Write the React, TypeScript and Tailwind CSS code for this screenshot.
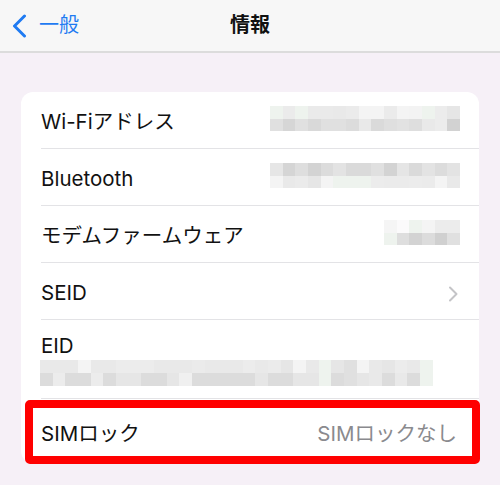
import React from "react";

const wifi = [
  ["#eef3ee", "#ebebeb", "#eef3ee", "#eaeaea", "#eaeaea", "#e9e9e9", "#ebebeb", "#f4f4f4", "#f4f4f4", "#ebebeb", "#f4f4f4", "#f3f3f3", "#eef3ee", "#ececec", "#e6e6e6"],
  ["#e0e0e0", "#d6d6d6", "#e0e0e0", "#d9d9d9", "#e0e0e0", "#e0e0e0", "#dcdcdc", "#e9e9e9", "#dadada", "#dfdfdf", "#e2e2e2", "#dedede", "#e9e9e9", "#ececec", "#d2d2d2"],
];
const bt = [
  ["#e6e6e6", "#d5d5d5", "#dedede", "#d3d3d3", "#dcdcdc", "#e3e3e3", "#dadada", "#dadada", "#e0e0e0", "#d3d3d3", "#e5e5e5", "#dadada", "#e3e3e3", "#dcdcdc", "#e3e3e3"],
  ["#f4f4f4", "#e9e9e9", "#ebebeb", "#e6e6e6", "#f4f4f4", "#eef3ee", "#eef3ee", "#eef3ee", "#ececec", "#ebebeb", "#ebebeb", "#ececec", "#ebebeb", "#f4f4f4", "#e9e9e9"],
];
const modem = [
  ["#f5f5f5", "#fbfafb", "#eef3ee", "#f4f4f4", "#ececec", "#ececec"],
  ["#eef3ee", "#dedede", "#d3d3d3", "#dcdcdc", "#d0d0d0", "#e0e0e0"],
];
const eid = [
  ["#e9e9e9", "#e9e9e9", "#e9e9e9", "#f4f4f4", "#e9e9e9", "#e9e9e9", "#ececec", "#ececec", "#ececec", "#e9e9e9", "#e9e9e9", "#e9e9e9", "#ebebeb", "#e9e9e9", "#e9e9e9", "#e9e9e9", "#ececec", "#e9e9e9", "#ebebeb", "#e6e6e6", "#f4f4f4", "#e9e9e9", "#eef3ee", "#e6e6e6", "#e0e0e0", "#f4f4f4", "#e9e9e9", "#e6e6e6", "#ececec", "#e9e9e9", "#eef3ee"],
  ["#dcdcdc", "#ececec", "#dcdcdc", "#dcdcdc", "#ececec", "#dcdcdc", "#e6e6e6", "#e6e6e6", "#dcdcdc", "#dcdcdc", "#e6e6e6", "#f0f0f0", "#dcdcdc", "#dcdcdc", "#dcdcdc", "#dcdcdc", "#dcdcdc", "#e6e6e6", "#dcdcdc", "#dcdcdc", "#e6e6e6", "#e6e6e6", "#eef3ee", "#dcdcdc", "#e0e0e0", "#e6e6e6", "#e9e9e9", "#dcdcdc", "#e9e9e9", "#dcdcdc", "#eef3ee"],
];

function Pixels({ rows, className }: { rows: string[][]; className: string }) {
  return (
    <div className={"flex flex-col " + className}>
      {rows.map((r, i) => (
        <div key={i} className="flex flex-1">
          {r.map((c, j) => (
            <div key={j} className="flex-1" style={{ backgroundColor: c }} />
          ))}
        </div>
      ))}
    </div>
  );
}

function Row({
  label,
  children,
}: {
  label: string;
  children?: React.ReactNode;
}) {
  return (
    <div className="pl-5">
      <div className="h-[57px] flex items-center justify-between pr-5 border-b border-[#e3e3e6]">
        <span className="text-[20.5px] leading-[25px] text-[#111111] mt-[3px]">{label}</span>
        {children}
      </div>
    </div>
  );
}

export default function App() {
  return (
    <div
      className="w-[500px] h-[485px] bg-[#f6f0f7] overflow-hidden"
      style={{ fontFamily: '"Inter", "Noto Sans CJK JP", sans-serif' }}
    >
      <div className="h-[53px] bg-[#f7f7f7] border-b-[2px] border-[#dcdcdc] relative flex items-center justify-center">
        <div className="absolute left-[12px] top-0 h-full flex items-center gap-[12px] text-[#1f7bf2]">
          <svg width="15" height="24" viewBox="0 0 15 24" fill="none">
            <path d="M12.5 2 L2.5 12 L12.5 22" stroke="#1f7bf2" strokeWidth="3" strokeLinecap="round" strokeLinejoin="round" />
          </svg>
          <span className="text-[20px] leading-[25px]">一般</span>
        </div>
        <span className="text-[20px] leading-[25px] font-bold text-[#111111]">情報</span>
      </div>

      <div className="mx-[21px] mt-[39px] bg-white rounded-[12px]">
        <Row label="Wi-Fiアドレス">
          <Pixels rows={wifi} className="w-[190px] h-[25px] -mr-[1px] -mt-[3px]" />
        </Row>
        <Row label="Bluetooth">
          <Pixels rows={bt} className="w-[190px] h-[25px] -mr-[1px] -mt-[3px]" />
        </Row>
        <Row label="モデムファームウェア">
          <Pixels rows={modem} className="w-[76px] h-[25px] -mr-[1px] -mt-[3px]" />
        </Row>
        <Row label="SEID">
          <svg width="10" height="16" viewBox="0 0 10 16" fill="none" className="mr-[1px] mt-[5px]">
            <path d="M2 1.5 L8.5 8 L2 14.5" stroke="#c4c4c7" strokeWidth="2" strokeLinecap="round" strokeLinejoin="round" />
          </svg>
        </Row>
        <div className="pl-5">
          <div className="border-b border-[#e3e3e6] pt-[13px] pb-[12px]">
            <div className="text-[20.5px] leading-[25px] text-[#111111]">EID</div>
            <Pixels rows={eid} className="w-[393px] h-[26px] mt-[2px] -ml-[1px]" />
          </div>
        </div>
        <div className="relative h-[64px] pl-5 pr-[22px] flex items-center justify-between">
          <span className="text-[20.5px] leading-[25px] text-[#111111] mt-[4px]">SIMロック</span>
          <span className="text-[20.5px] leading-[25px] text-[#8a8a8e] mt-[4px]">SIMロックなし</span>
          <div className="absolute left-[4px] -right-[1px] top-[1px] -bottom-[1px] border-[8px] border-[#ff0000] rounded-[5px]" />
        </div>
      </div>
    </div>
  );
}
